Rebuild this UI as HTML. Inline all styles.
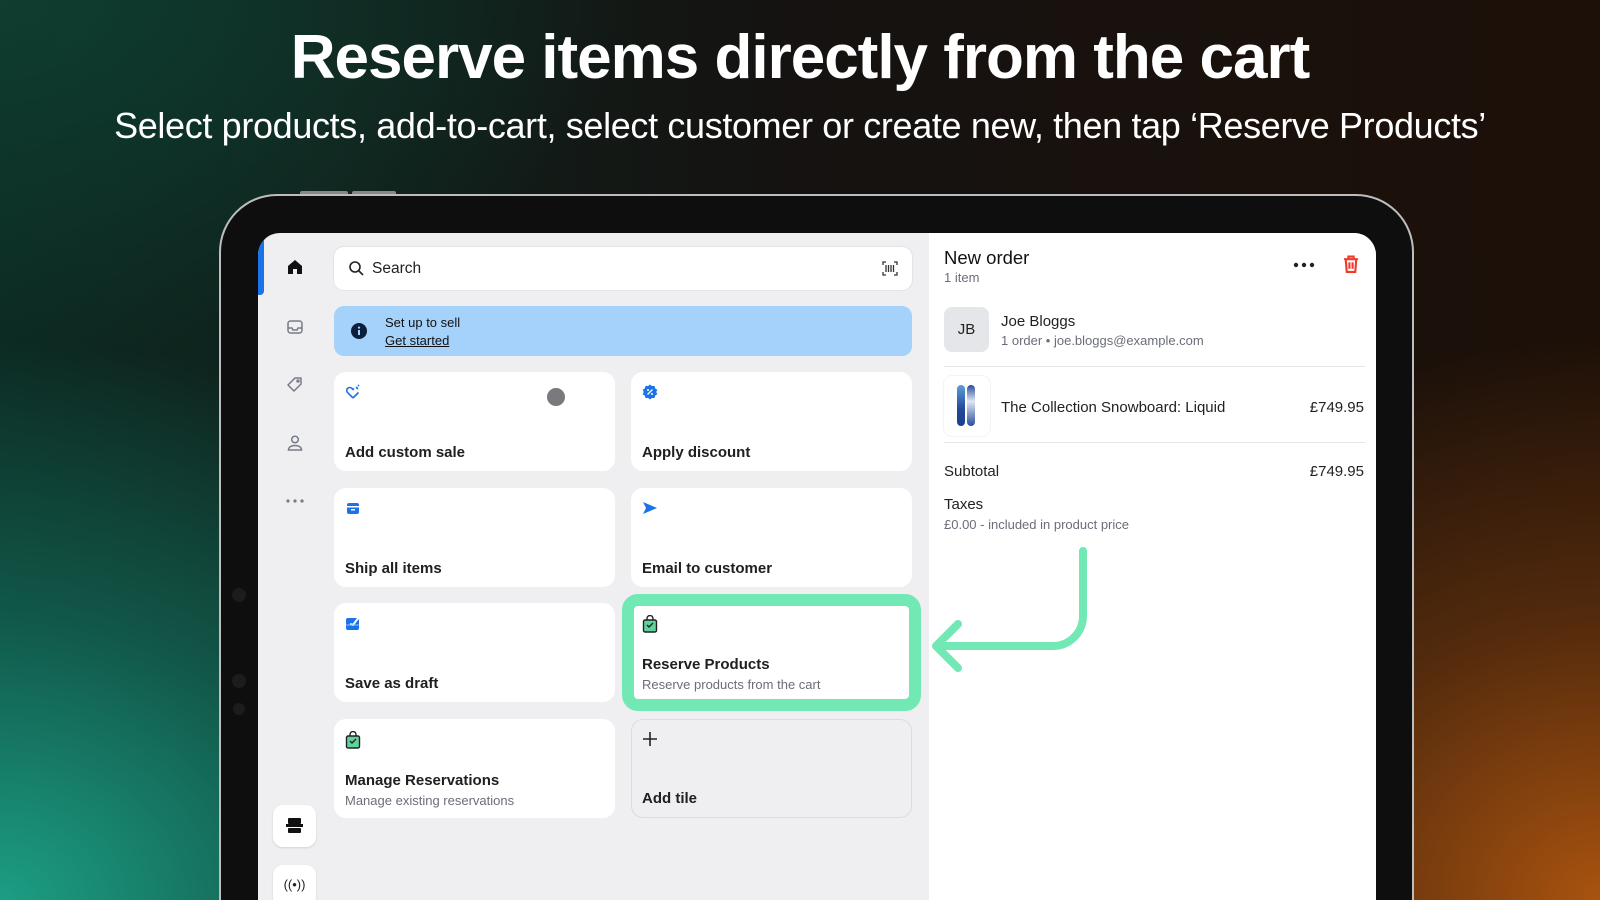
<!DOCTYPE html>
<html><head><meta charset="utf-8"><style>
*{margin:0;padding:0;box-sizing:border-box}
html{width:1600px;height:900px;overflow:hidden}
body{width:1600px;height:900px;overflow:hidden;position:relative;font-family:"Liberation Sans",sans-serif;
background:radial-gradient(ellipse 900px 700px at 0% 100%,#1c9e84 0%,rgba(20,120,100,.6) 40%,rgba(0,0,0,0) 80%),
radial-gradient(ellipse 800px 700px at 100% 100%,#a9530f 0%,rgba(120,60,15,.6) 40%,rgba(0,0,0,0) 80%),
radial-gradient(ellipse 700px 400px at 0% 0%,#0f3d30 0%,rgba(0,0,0,0) 90%),
linear-gradient(90deg,#0c2a22,#151211 50%,#1d1008);}
.abs{position:absolute}
h1{position:absolute;left:0;width:1600px;top:22px;text-align:center;color:#fff;font-size:62px;font-weight:700;letter-spacing:-1px}
h2{position:absolute;left:0;width:1600px;top:105px;text-align:center;color:#fff;font-size:36px;font-weight:400;letter-spacing:-.35px}
.frame{left:219px;top:194px;width:1195px;height:706px;border-radius:58px 58px 0 0;background:#0e0e0e;border:2px solid #bdbdbd;border-bottom:none}
.screen{left:258px;top:233px;width:1118px;height:667px;border-radius:22px 22px 0 0;background:#efeff2;overflow:hidden}
.right{position:absolute;left:671px;top:0;width:447px;height:700px;background:#fff}
.tile{position:absolute;width:281px;height:99px;background:#fff;border-radius:12px}
.tile .t{position:absolute;left:11px;bottom:10px;font-size:15px;color:#202020;font-weight:600}
.tile .t2{position:absolute;left:11px;bottom:29px;font-size:15px;color:#202020;font-weight:600}
.tile .s{position:absolute;left:11px;bottom:10px;font-size:13px;color:#6b6e7a}
.tile svg{position:absolute;left:11px;top:12px}
.side svg{position:absolute}
</style></head><body>
<h1>Reserve items directly from the cart</h1>
<h2>Select products, add-to-cart, select customer or create new, then tap ‘Reserve Products’</h2>
<div class="abs" style="left:300px;top:191px;width:48px;height:4px;background:#888;border-radius:2px"></div>
<div class="abs" style="left:352px;top:191px;width:44px;height:4px;background:#888;border-radius:2px"></div>
<div class="abs frame"></div>
<div class="abs" style="left:232px;top:588px;width:14px;height:14px;border-radius:50%;background:#1c1c1c"></div>
<div class="abs" style="left:232px;top:674px;width:14px;height:14px;border-radius:50%;background:#1c1c1c"></div>
<div class="abs" style="left:233px;top:703px;width:12px;height:12px;border-radius:50%;background:#1c1c1c"></div>
<div class="abs screen">
 <div class="abs" style="left:0;top:0;width:6px;height:62px;background:#1a73e8;border-radius:0 4px 4px 0"></div>
 <div class="side">
  <svg style="left:28px;top:25px" width="18" height="18" viewBox="0 0 18 18"><path d="M2 8L9 2l7 6v8h-5v-5H7v5H2z" fill="#111"/></svg>
  <svg style="left:28px;top:85px" width="18" height="18" viewBox="0 0 18 18" fill="none" stroke="#777b86" stroke-width="1.5"><rect x="2" y="3" width="14" height="12" rx="2.5"/><path d="M2 10h4l1 2h4l1-2h4"/></svg>
  <svg style="left:28px;top:143px" width="18" height="18" viewBox="0 0 18 18" fill="none" stroke="#777b86" stroke-width="1.5"><path d="M9 2h6v6l-7 7-6-6z" stroke-linejoin="round"/><circle cx="12" cy="5" r="1"/></svg>
  <svg style="left:28px;top:201px" width="18" height="18" viewBox="0 0 18 18" fill="none" stroke="#777b86" stroke-width="1.5"><circle cx="9" cy="5.5" r="3.3"/><path d="M2.5 16c0-3 3-4.5 6.5-4.5s6.5 1.5 6.5 4.5z"/></svg>
  <svg style="left:27px;top:265px" width="20" height="6" viewBox="0 0 20 6" fill="#777b86"><circle cx="3" cy="3" r="1.6"/><circle cx="10" cy="3" r="1.6"/><circle cx="17" cy="3" r="1.6"/></svg>
 </div>
 <div class="abs" style="left:15px;top:572px;width:43px;height:42px;background:#fff;border-radius:10px;box-shadow:0 1px 2px rgba(0,0,0,.12)"><svg style="position:absolute;left:13px;top:12px" width="17" height="17" viewBox="0 0 17 17" fill="#111"><rect x="2" y="1" width="13" height="6" rx="1"/><rect x="0" y="7" width="17" height="3"/><rect x="2" y="11" width="13" height="5" rx="1"/></svg></div>
 <div class="abs" style="left:15px;top:632px;width:43px;height:42px;background:#fff;border-radius:10px;box-shadow:0 1px 2px rgba(0,0,0,.12);font-size:13px;text-align:center;line-height:40px;color:#222">((•))</div>
 <div class="abs" style="left:76px;top:14px;width:578px;height:43px;background:#fff;border-radius:10px;box-shadow:0 0 0 1px #e3e3e6">
  <svg style="position:absolute;left:14px;top:13px" width="17" height="17" viewBox="0 0 17 17" fill="none" stroke="#222" stroke-width="1.6"><circle cx="7" cy="7" r="5"/><path d="M11 11l4 4"/></svg>
  <div class="abs" style="left:38px;top:13px;font-size:15.5px;color:#222">Search</div>
  <svg style="position:absolute;right:14px;top:14px" width="16" height="15" viewBox="0 0 16 15" fill="none" stroke="#333" stroke-width="1.3"><path d="M1 4V1h3M12 1h3v3M15 11v3h-3M4 14H1v-3M4 4v7M6.5 4v7M9 4v7M11.5 4v7"/></svg>
 </div>
 <div class="abs" style="left:76px;top:73px;width:578px;height:50px;background:#a4d2fb;border-radius:10px">
  <svg style="position:absolute;left:17px;top:17px" width="16" height="16" viewBox="0 0 16 16"><circle cx="8" cy="8" r="8" fill="#0b1f3d"/><rect x="7" y="7" width="2" height="5" fill="#a4d2fb"/><circle cx="8" cy="4.6" r="1.1" fill="#a4d2fb"/></svg>
  <div class="abs" style="left:51px;top:9px;font-size:13px;color:#111">Set up to sell</div>
  <div class="abs" style="left:51px;top:27px;font-size:13px;color:#111;text-decoration:underline">Get started</div>
 </div>
 <div class="tile" style="left:76px;top:139px"><svg width="16" height="16" viewBox="0 0 16 16" fill="none" stroke="#1a73e8" stroke-width="1.6"><path d="M8 14L2.5 8.5a3 3 0 014.5-4L8 5.5l1-1"/><path d="M8 14l5.5-5.5M11 3l2 2M14 1l-1 1"/></svg><div class="abs" style="left:213px;top:16px;width:18px;height:18px;border-radius:50%;background:#7a7a7e"></div><div class="t">Add custom sale</div></div>
 <div class="tile" style="left:373px;top:139px"><svg width="16" height="16" viewBox="0 0 16 16"><path d="M8 0.5l2 1.6 2.5-.2.6 2.5 2.2 1.3-1 2.3 1 2.3-2.2 1.3-.6 2.5-2.5-.2L8 15.5l-2-1.6-2.5.2-.6-2.5L.7 10.3l1-2.3-1-2.3 2.2-1.3.6-2.5 2.5.2z" fill="#1a73e8"/><path d="M5.5 10.5l5-5" stroke="#fff" stroke-width="1.3"/><circle cx="6" cy="6" r="1" fill="#fff"/><circle cx="10" cy="10" r="1" fill="#fff"/></svg><div class="t">Apply discount</div></div>
 <div class="tile" style="left:76px;top:255px"><svg width="16" height="16" viewBox="0 0 16 16"><rect x="2" y="3" width="12" height="11" rx="2" fill="#1a73e8"/><rect x="2" y="6" width="12" height="1.5" fill="#fff"/><rect x="6" y="9" width="4" height="1.5" fill="#fff"/></svg><div class="t">Ship all items</div></div>
 <div class="tile" style="left:373px;top:255px"><svg width="16" height="16" viewBox="0 0 16 16"><path d="M1 2l14 6-14 6 3-6z" fill="#1a73e8"/></svg><div class="t">Email to customer</div></div>
 <div class="tile" style="left:76px;top:370px"><svg width="16" height="16" viewBox="0 0 16 16"><rect x="1" y="3" width="13" height="12" rx="2" fill="#1a73e8"/><path d="M5 9l3 1 6-8" stroke="#fff" stroke-width="2" fill="none"/><path d="M1 10h13" stroke="#8ec0ff" stroke-width="1"/></svg><div class="t">Save as draft</div></div>
 <div class="tile" style="left:373px;top:370px"><svg width="16" height="18" viewBox="0 0 16 18"><path d="M5 5V3.5a3 3 0 016 0V5" stroke="#222" stroke-width="1.4" fill="none"/><rect x="1.5" y="5" width="13" height="12" rx="1.5" fill="#5fd39b" stroke="#222" stroke-width="1.4"/><path d="M5 10l2 2 4-4" stroke="#222" stroke-width="1.4" fill="none"/></svg><div class="t2">Reserve Products</div><div class="s">Reserve products from the cart</div></div>
 <div class="tile" style="left:76px;top:486px"><svg width="16" height="18" viewBox="0 0 16 18"><path d="M5 5V3.5a3 3 0 016 0V5" stroke="#222" stroke-width="1.4" fill="none"/><rect x="1.5" y="5" width="13" height="12" rx="1.5" fill="#5fd39b" stroke="#222" stroke-width="1.4"/><path d="M5 10l2 2 4-4" stroke="#222" stroke-width="1.4" fill="none"/></svg><div class="t2">Manage Reservations</div><div class="s">Manage existing reservations</div></div>
 <div class="tile" style="left:373px;top:486px;background:#efeff2;border:1px solid #dcdce0"><svg width="16" height="16" viewBox="0 0 16 16" style="left:10px;top:11px"><path d="M8 1v14M1 8h14" stroke="#222" stroke-width="1.6"/></svg><div class="t" style="left:10px">Add tile</div></div>
 <div class="abs" style="left:364px;top:361px;width:299px;height:117px;border:12px solid #72e8b4;border-radius:16px"></div>
 <div class="right">
  <div class="abs" style="left:15px;top:14px;font-size:18.5px;color:#111">New order</div>
  <div class="abs" style="left:15px;top:37px;font-size:13px;color:#6b6e7a">1 item</div>
  <svg style="position:absolute;left:364px;top:29px" width="22" height="6" viewBox="0 0 22 6" fill="#222"><circle cx="3" cy="3" r="2.2"/><circle cx="11" cy="3" r="2.2"/><circle cx="19" cy="3" r="2.2"/></svg>
  <svg style="position:absolute;left:414px;top:22px" width="16" height="18" viewBox="0 0 15 17" fill="none" stroke="#ef3b2c" stroke-width="2"><path d="M1 4h13M5 4V1.5h5V4M2.5 4l1 12h8l1-12M6 7v6M9 7v6"/></svg>
  <div class="abs" style="left:15px;top:74px;width:45px;height:45px;background:#e5e6ea;border-radius:8px;text-align:center;line-height:45px;font-size:15px;color:#222">JB</div>
  <div class="abs" style="left:72px;top:80px;font-size:15px;color:#222">Joe Bloggs</div>
  <div class="abs" style="left:72px;top:100px;font-size:13px;color:#6b6e7a">1 order • joe.bloggs@example.com</div>
  <div class="abs" style="left:15px;top:133px;width:421px;height:1px;background:#e6e6ea"></div>
  <div class="abs" style="left:15px;top:143px;width:46px;height:60px;border-radius:8px;box-shadow:0 0 0 1px #f3f3f5">
   <div class="abs" style="left:13px;top:9px;width:8px;height:41px;border-radius:4px;background:linear-gradient(#5aa0d8,#22469a 60%,#1d3e8f)"></div>
   <div class="abs" style="left:23px;top:9px;width:8px;height:41px;border-radius:4px;background:linear-gradient(#2a4c9a,#dfe6f3 40%,#2a4c9a)"></div>
  </div>
  <div class="abs" style="left:72px;top:166px;font-size:15px;color:#222">The Collection Snowboard: Liquid</div>
  <div class="abs" style="right:12px;top:166px;font-size:15px;color:#222">£749.95</div>
  <div class="abs" style="left:15px;top:209px;width:421px;height:1px;background:#e6e6ea"></div>
  <div class="abs" style="left:15px;top:230px;font-size:15px;color:#222">Subtotal</div>
  <div class="abs" style="right:12px;top:230px;font-size:15px;color:#222">£749.95</div>
  <div class="abs" style="left:15px;top:263px;font-size:15px;color:#222">Taxes</div>
  <div class="abs" style="left:15px;top:284px;font-size:13px;color:#6b6e7a">£0.00 - included in product price</div>
 </div>
 <svg class="abs" style="left:640px;top:310px" width="200" height="140" viewBox="0 0 200 140"><path d="M185 8v65a30 30 0 01-30 30H45M60 81L38 103l22 22" fill="none" stroke="#72e8b4" stroke-width="8" stroke-linecap="round" stroke-linejoin="round"/></svg>
</div>
</body></html>
